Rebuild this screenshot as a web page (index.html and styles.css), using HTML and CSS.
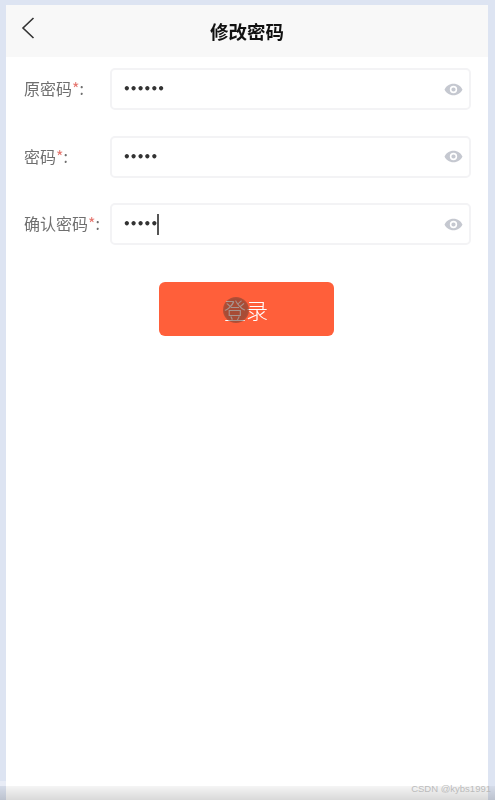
FILE: index.html
```html
<!DOCTYPE html>
<html>
<head>
    <meta charset="UTF-8">
    <title>修改密码</title>
    <link rel="stylesheet" href="styles.css">
</head>
<body>
    <div class="panel">
        <div class="header">
            <svg class="back" width="14" height="24" viewBox="0 0 14 24"><path d="M12.5 2 L2 12 L12.5 22" fill="none" stroke="#333" stroke-width="1.6"/></svg>
            <h1>修改密码</h1>
        </div>
        <form class="form">
            <div class="row">
                <label>原密码<span class="star">*</span>:</label>
                <div class="field">
                    <span class="dots">••••••</span>
                    <svg class="eye" width="19" height="15" viewBox="0 0 18 14"><path fill-rule="evenodd" d="M9 1.5C5 1.5 1.8 4 .5 7c1.3 3 4.500 5.500 8.500 5.500s7.200-2.500 8.500-5.500C16.200 4 13 1.500 9 1.500zM9 3.500a3.500 3.500 0 1 1 0 7 3.500 3.500 0 0 1 0-7zM9 5a2 2 0 1 0 0 4 2 2 0 0 0 0-4z"/></svg>
                </div>
            </div>
            <div class="row">
                <label>密码<span class="star">*</span>:</label>
                <div class="field">
                    <span class="dots">•••••</span>
                    <svg class="eye" width="19" height="15" viewBox="0 0 18 14"><path fill-rule="evenodd" d="M9 1.5C5 1.5 1.8 4 .5 7c1.3 3 4.500 5.500 8.500 5.500s7.200-2.500 8.500-5.500C16.200 4 13 1.500 9 1.500zM9 3.500a3.500 3.500 0 1 1 0 7 3.500 3.500 0 0 1 0-7zM9 5a2 2 0 1 0 0 4 2 2 0 0 0 0-4z"/></svg>
                </div>
            </div>
            <div class="row">
                <label>确认密码<span class="star">*</span>:</label>
                <div class="field">
                    <span class="dots">•••••</span><span class="caret"></span>
                    <svg class="eye" width="19" height="15" viewBox="0 0 18 14"><path fill-rule="evenodd" d="M9 1.5C5 1.5 1.8 4 .5 7c1.3 3 4.500 5.500 8.500 5.500s7.200-2.500 8.500-5.500C16.200 4 13 1.500 9 1.500zM9 3.500a3.500 3.500 0 1 1 0 7 3.500 3.500 0 0 1 0-7zM9 5a2 2 0 1 0 0 4 2 2 0 0 0 0-4z"/></svg>
                </div>
            </div>
            <div class="actions">
                <button type="button" class="submit"><span class="submit-text">登录</span><span class="cursor"></span></button>
            </div>
        </form>
    </div>
    <!-- bottom strip and watermark sit over the page -->
    <div class="strip-light"></div>
    <div class="strip"></div>
    <div class="watermark">CSDN @kybs1991</div>
</body>
</html>
```

FILE: styles.css
```css
html, body {
    height: 100%;
}
body {
    margin: 0;
    background-color: #dde4f2;
    font-family: "Noto Sans CJK SC", "Liberation Sans", sans-serif;
    overflow: hidden;
}
.panel {
    margin: 5px 7px 0 6px;
    height: 795px;
    background-color: #FFFFFF;
    filter: blur(0.35px);
}
.header {
    position: relative;
    height: 52px;
    background-color: #f8f8f8;
    display: flex;
    align-items: center;
    justify-content: center;
}
.header h1 {
    margin: 0;
    font-size: 18.5px;
    font-weight: 700;
    line-height: 52px;
    color: #111111;
}
.back {
    position: absolute;
    left: 15px;
    top: 11px;
}
.form {
    padding: 11px 17px 0 18px;
}
.row {
    display: flex;
    align-items: center;
    height: 42px;
    margin-bottom: 25.5px;
}
label {
    width: 86px;
    margin-top: -2px;
    font-size: 16px;
    color: #6f6f6f;
}
.star {
    color: #e5766f;
}
.field {
    flex: 1;
    height: 42px;
    box-sizing: border-box;
    border: 2px solid #f3f3f5;
    border-radius: 5px;
    padding: 0 16px 0 11px;
    display: flex;
    align-items: center;
}
.dots {
    font-family: "DejaVu Sans", sans-serif;
    font-size: 12px;
    font-weight: 700;
    letter-spacing: -0.8px;
    color: #333333;
}
.caret {
    width: 1.500px;
    height: 21px;
    background-color: #555555;
}
.eye {
    margin-left: auto;
    margin-right: -10px;
    fill: #c5c8d0;
}
.actions {
    display: flex;
    justify-content: center;
    padding-top: 11.500px;
}
.submit {
    position: relative;
    width: 175px;
    height: 54px;
    margin-right: 3px;
    border: none;
    border-radius: 6px;
    background-color: #ff5f3a;
    color: #FFFFFF;
    font-family: "Noto Sans CJK SC", sans-serif;
    font-size: 22px;
    font-weight: 300;
}
.cursor {
    position: absolute;
    left: 64px;
    top: 15px;
    width: 26px;
    height: 26px;
    border-radius: 50%;
    background: radial-gradient(circle, rgba(95, 60, 50, 0.55) 60%, rgba(95, 60, 50, 0.2) 100%);
}
.strip-light {
    position: absolute;
    left: 0;
    bottom: 14px;
    width: 6px;
    height: 5px;
    background-color: #e8ecf6;
}
.strip {
    position: absolute;
    left: 0;
    right: 0;
    bottom: 0;
    height: 14px;
    background: linear-gradient(rgba(0, 0, 0, 0.04), rgba(0, 0, 0, 0.15));
}
.watermark {
    position: absolute;
    right: 4px;
    bottom: 6px;
    font-family: "Liberation Sans", sans-serif;
    font-size: 9.500px;
    color: #bbbbbb;
}
```
